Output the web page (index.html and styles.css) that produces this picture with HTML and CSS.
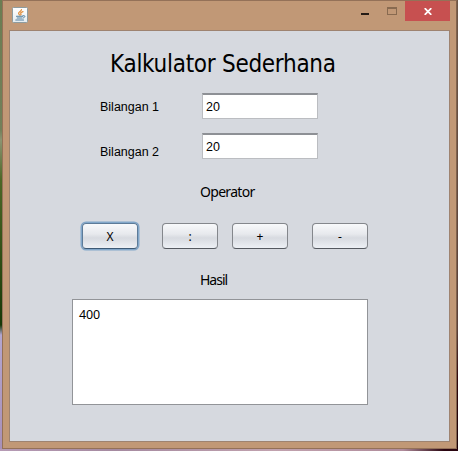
FILE: index.html
```html
<!DOCTYPE html>
<html lang="id">
<head>
<meta charset="utf-8">
<title>Kalkulator Sederhana</title>
<link rel="stylesheet" href="styles.css">
</head>
<body>
<div class="window">
  <header class="titlebar">
    <svg class="java" width="16" height="16" viewBox="0 0 16 16">
      <defs><linearGradient id="tile" x1="0" y1="0" x2="0" y2="1"><stop offset="0" stop-color="#fff"/><stop offset="1" stop-color="#e4ebee"/></linearGradient></defs>
      <rect x=".5" y=".5" width="15" height="15" rx="1" fill="url(#tile)" stroke="#8e9c9f"/>
      <g fill="none" stroke-linecap="round">
        <path d="M9.5 2.5C9.5 4.5 6.2 5 6.6 6.4 6.8 7.2 7.4 7.4 7.5 8M11 4.6C8.8 5.4 8.2 6 9 7 9.2 7.4 8.9 7.8 8.6 8" stroke="#e08a35" stroke-width="1.2"/>
        <path d="M4.5 9.2H10.8M5.2 11H10M3.8 13H11.5" stroke="#527f9d" stroke-width="1.1"/>
        <path d="M11 8.6C13.6 8 13.5 10.4 11.2 11" stroke="#527f9d"/>
      </g>
    </svg>
    <div class="controls">
      <span class="control minimize"><i></i></span>
      <span class="control maximize"><i></i></span>
      <span class="control close"><svg width="8" height="7" viewBox="0 0 8 7"><path d="M.7.2 7.3 6.8M7.3.2.7 6.8" stroke="#fff" stroke-width="1.8"/></svg></span>
    </div>
  </header>
  <main class="client">
    <h1>Kalkulator Sederhana</h1>
    <div class="row first"><label>Bilangan 1</label><div class="field">20</div></div>
    <div class="row second"><label>Bilangan 2</label><div class="field">20</div></div>
    <h2 class="operator">Operator</h2>
    <div class="buttons">
      <button class="focused">X</button>
      <button>:</button>
      <button>+</button>
      <button>-</button>
    </div>
    <h2 class="hasil">Hasil</h2>
    <div class="result">400</div>
  </main>
</div>
</body>
</html>
```
FILE: styles.css
```css
* { box-sizing: border-box; }
body {
  margin: 0;
  width: 458px;
  height: 451px;
  overflow: hidden;
  padding: 0 1px 2px 2px;
  background:
    linear-gradient(90deg, #b69bb5, #a58aa0 25%, #c1a2ae 60%, #b08c9b 88%, #2a0510 97%) 0 449px / 458px 2px no-repeat,
    linear-gradient(#6b7d52, #72805a 130px, #8c9472 140px, #4c6726 180px, #173807 325px, #b3a6d0 335px, #a890b8 449px) 0 0 / 3px 451px no-repeat,
    linear-gradient(#6d5748, #5b4039 330px, #32060c 380px, #1c0209) 455px 0 / 3px 451px no-repeat;
}
.window {
  width: 455px;
  height: 449px;
  border: 1px solid #947158;
  border-right-color: #80634d;
  background: #c19876;
  padding: 0 6px 6px;
}
.titlebar { display: flex; justify-content: space-between; height: 29px; }
.java { margin: 6px 0 0 3px; }
.controls { display: flex; height: 20px; }
.control { display: flex; justify-content: center; }
.minimize { width: 27px; }
.minimize i { width: 8px; height: 2px; margin-top: 12px; background: #251b15; }
.maximize { width: 27px; }
.maximize i { width: 10px; height: 8px; margin-top: 6px; border: 1px solid #886a50; border-top-width: 2px; }
.close { width: 45px; background: #c75050; }
.close svg { margin-top: 7px; }
.client {
  width: 441px;
  height: 412px;
  border: 1px solid #9e8370;
  background: #d6d9df;
  color: #000;
  font: 12px/16px "Liberation Sans", Arial, sans-serif;
}
h1, h2 { margin: 0; font-weight: 400; }
h1 {
  margin-left: 100px;
  padding-top: 18px;
  height: 62px;
  font-family: "DejaVu Sans Condensed", "DejaVu Sans", sans-serif;
  font-stretch: condensed;
  font-size: 24px;
  line-height: 30px;
  letter-spacing: -.28px;
  white-space: nowrap;
}
.row { display: flex; height: 26px; margin-left: 90px; }
.row label { width: 102px; font-size: 12.5px; }
.first label { padding-top: 6px; }
.second { margin-top: 14px; }
.second label { padding-top: 11px; }
.field {
  width: 116px;
  height: 26px;
  padding: 4px 3px;
  border: 1px solid #bbbdc1;
  border-top: 2px solid #8d9095;
  background: #fff;
  font-size: 12.5px;
}
h2 { margin-left: 190px; font-family: "Noto Sans", sans-serif; font-size: 14px; line-height: 18px; letter-spacing: -.7px; }
.operator { margin-top: 24px; }
.buttons { display: flex; margin: 22px 0 0 72px; }
button {
  width: 56px;
  height: 26px;
  margin-right: 24px;
  padding: 1px 0 0;
  border: 1px solid #84878c;
  border-bottom-color: #555960;
  border-radius: 4px;
  background: linear-gradient(#f8f9fb, #e7e9ed 42%, #d7dae0 58%, #edf0f5);
  color: #000;
  font: 12px/16px "Noto Sans", sans-serif;
}
button:nth-child(2) { margin-right: 14px; }
.focused { border-color: #5d7b98; border-bottom-color: #3d5975; box-shadow: 0 0 0 1.5px #82a7ca; }
.hasil { margin-top: 22px; letter-spacing: -1px; }
.result {
  width: 296px;
  height: 106px;
  margin: 10px 0 0 62px;
  padding: 7px 6px;
  border: 1px solid #929498;
  background: #fff;
  font: 12.5px/16px "Noto Sans", sans-serif;
  letter-spacing: -.1px;
}
```
